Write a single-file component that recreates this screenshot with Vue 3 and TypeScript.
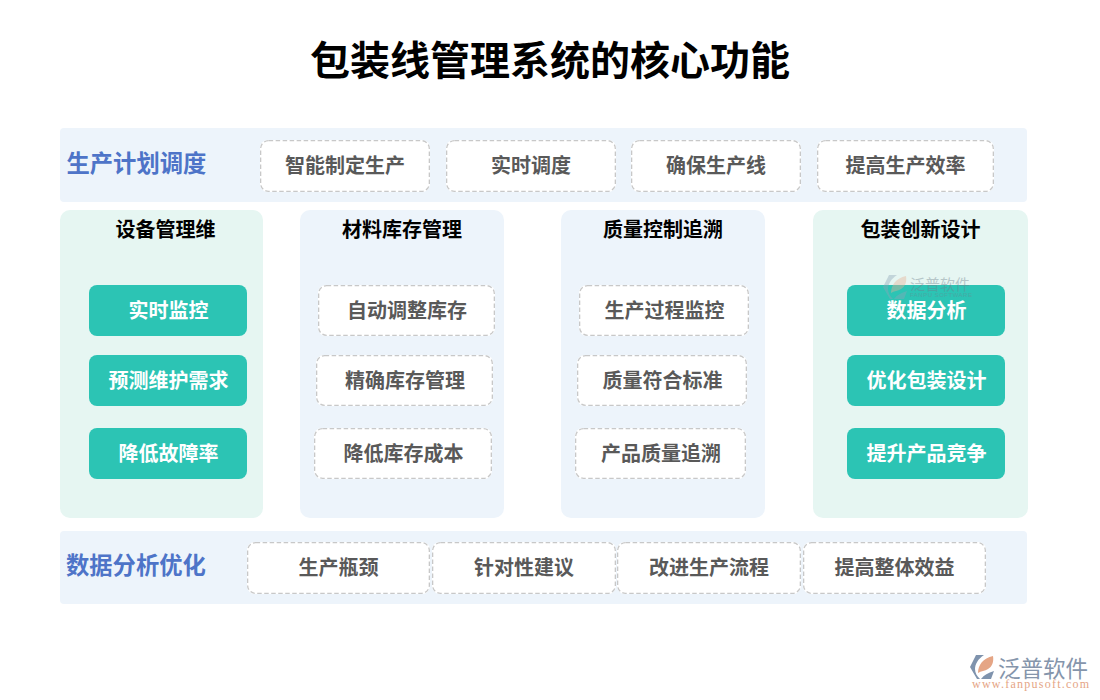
<script setup lang="ts">
const topChips = [
  { text: '智能制定生产', cls: 'w170 ml0' },
  { text: '实时调度', cls: 'w170 ml16' },
  { text: '确保生产线', cls: 'w170 ml15' },
  { text: '提高生产效率', cls: 'w177 ml16' },
]
const bottomChips = [
  { text: '生产瓶颈', cls: 'w183 ml0' },
  { text: '针对性建议', cls: 'w184 ml2' },
  { text: '改进生产流程', cls: 'w184 ml1' },
  { text: '提高整体效益', cls: 'w183 ml2' },
]
const columns = [
  { title: '设备管理维', cls: 'col-a', tone: 'solid', items: [['实时监控', 'pa'], ['预测维护需求', 'pa'], ['降低故障率', 'pa']] },
  { title: '材料库存管理', cls: 'col-b', tone: 'dash', items: [['自动调整库存', 'b1'], ['精确库存管理', 'b2'], ['降低库存成本', 'b3']] },
  { title: '质量控制追溯', cls: 'col-c', tone: 'dash', items: [['生产过程监控', 'c1'], ['质量符合标准', 'c2'], ['产品质量追溯', 'c3']] },
  { title: '包装创新设计', cls: 'col-d', tone: 'solid', items: [['数据分析', 'pd'], ['优化包装设计', 'pd'], ['提升产品竞争', 'pd']] },
]
</script>

<template>
  <div class="page">
    <h1 class="title">包装线管理系统的核心功能</h1>

    <section class="band band-top">
      <div class="band-label lt">生产计划调度</div>
      <div v-for="c in topChips" :key="c.text" class="chip" :class="c.cls">
        <svg class="dash-line"><rect /></svg>
        {{ c.text }}
      </div>
    </section>

    <section class="cols">
      <div v-for="col in columns" :key="col.title" class="col" :class="col.cls">
        <div class="col-title">{{ col.title }}</div>
        <div class="col-items">
          <div v-for="it in col.items" :key="it[0]" class="item" :class="[col.tone, it[1]]">
            <svg v-if="col.tone === 'dash'" class="dash-line"><rect /></svg>
            {{ it[0] }}
          </div>
        </div>
        <div v-if="col.cls === 'col-d'" class="mark">
          <svg width="24" height="24" viewBox="0 0 24 24">
            <path d="M6 0H14C8 4 5 9 5 14C5 18 7 21 10 24H7L0 12Z" fill="#8fa6b8" />
            <path d="M23 1C24 7 22 12 18 14C15 16 11 16 8 18C8 10 13 3 23 1Z" fill="#e8b195" />
            <path d="M11 24C14 20 18 18 24 16L21 24Z" fill="#8fa6b8" />
          </svg>
          <div class="mark-text">
            <div class="mark-cn">泛普软件</div>
            <div class="mark-en">FANPU SOFTWARE</div>
          </div>
        </div>
      </div>
    </section>

    <section class="band band-bottom">
      <div class="band-label lb">数据分析优化</div>
      <div v-for="c in bottomChips" :key="c.text" class="chip" :class="c.cls">
        <svg class="dash-line"><rect /></svg>
        {{ c.text }}
      </div>
    </section>

    <div class="logo">
      <div class="logo-top">
        <svg width="24" height="24" viewBox="0 0 24 24">
          <path d="M6 0H14C8 4 5 9 5 14C5 18 7 21 10 24H7L0 12Z" fill="#7f93ad" />
          <path d="M23 1C24 7 22 12 18 14C15 16 11 16 8 18C8 10 13 3 23 1Z" fill="#e5a585" />
          <path d="M11 24C14 20 18 18 24 16L21 24Z" fill="#7f93ad" />
        </svg>
        <span class="logo-cn">泛普软件</span>
      </div>
      <div class="logo-url">www.fanpusoft.com</div>
    </div>
  </div>
</template>

<style>
html, body { margin: 0; background: #fff; }
</style>

<style scoped>
.page {
  position: relative;
  width: 1100px;
  height: 700px;
  overflow: hidden;
  background: #fff;
  font-family: "Noto Sans CJK SC", "Liberation Sans", sans-serif;
}
.title {
  margin: 0;
  padding-top: 29px;
  height: 128px;
  box-sizing: border-box;
  text-align: center;
  font-size: 40px;
  line-height: 58px;
  font-weight: 700;
  color: #000;
}
.band {
  display: flex;
  align-items: center;
  width: 967px;
  margin-left: 60px;
  background: #edf4fb;
  border-radius: 4px;
}
.band-top { height: 74px; padding-top: 2px; box-sizing: border-box; }
.band-bottom { height: 73px; margin-top: 13px; }
.band-label {
  font-size: 23.3px;
  font-weight: 700;
  color: #4e74c8;
  white-space: nowrap;
  line-height: 30px;
  box-sizing: border-box;
  flex: none;
}
.lt { width: 200px; padding-left: 6.5px; margin-top: -8px; }
.lb { width: 187px; padding-left: 6px; margin-top: -7px; }
.chip, .item {
  position: relative;
  box-sizing: border-box;
  display: flex;
  align-items: center;
  justify-content: center;
  font-size: 20px;
  font-weight: 700;
  border-radius: 8px;
  white-space: nowrap;
}
.chip {
  flex: none;
  height: 52px;
  background: #fff;
  color: #595959;
}
.dash-line {
  position: absolute;
  left: 0;
  top: 0;
  width: 100%;
  height: 100%;
  pointer-events: none;
}
.dash-line rect {
  x: 0.65px;
  y: 0.65px;
  width: calc(100% - 1.3px);
  height: calc(100% - 1.3px);
  rx: 8px;
  fill: none;
  stroke: #c8c8c8;
  stroke-width: 1.3px;
  stroke-dasharray: 4.5 2.5;
}
.band-top .chip { padding-bottom: 4px; }
.band-bottom .chip { padding-bottom: 2px; }
.w170 { width: 170px; }
.w177 { width: 177px; }
.w183 { width: 183px; }
.w184 { width: 184px; }
.ml0 { margin-left: 0; }
.ml1 { margin-left: 1px; }
.ml2 { margin-left: 2px; }
.ml15 { margin-left: 15px; }
.ml16 { margin-left: 16px; }
.cols {
  display: flex;
  margin: 8px 0 0 60px;
  height: 308px;
}
.col {
  position: relative;
  box-sizing: border-box;
  border-radius: 10px;
  padding-top: 5px;
}
.col-a { width: 203px; background: #e6f6f2; }
.col-b { width: 204px; margin-left: 37px; background: #edf4fb; }
.col-c { width: 204px; margin-left: 57px; background: #edf4fb; }
.col-d { width: 215px; margin-left: 48px; background: #e6f6f2; }
.col-title {
  height: 28px;
  line-height: 28px;
  font-size: 20px;
  font-weight: 700;
  color: #000;
  text-align: center;
}
.col-a .col-title { padding-left: 8px; }
.col-items {
  margin-top: 42px;
  display: flex;
  flex-direction: column;
}
.item { height: 51px; padding: 0 0 2px 1px; }
.item + .item { margin-top: 19px; }
.item + .item + .item { margin-top: 22px; }
.solid { background: #2cc4b4; color: #fff; border-radius: 8px; width: 158px; }
.dash { background: #fff; color: #595959; }
.pa { margin-left: 29px; }
.pd { margin-left: 34px; }
.b1 { margin-left: 18px; width: 177px; }
.b2 { margin-left: 16px; width: 177px; }
.b3 { margin-left: 14px; width: 178px; }
.c1 { margin-left: 18px; width: 170px; }
.c2 { margin-left: 16px; width: 170px; }
.c3 { margin-left: 14px; width: 171px; }
.mark {
  position: absolute;
  left: 70px;
  top: 65px;
  display: flex;
  align-items: flex-start;
  gap: 3px;
  opacity: 0.4;
}
.mark-text { display: flex; flex-direction: column; }
.mark-cn { font-size: 15px; line-height: 17px; color: #6f7f8c; white-space: nowrap; }
.mark-en {
  font-size: 6px;
  line-height: 7px;
  color: #6f7f8c;
  font-family: "Liberation Sans", sans-serif;
  letter-spacing: 0.5px;
  white-space: nowrap;
}
.logo {
  position: absolute;
  left: 970px;
  top: 655px;
  width: 125px;
}
.logo-top { display: flex; align-items: center; gap: 4px; height: 24px; }
.logo-cn {
  font-size: 22.5px;
  line-height: 24px;
  color: #8595ab;
  font-weight: 400;
  white-space: nowrap;
}
.logo-url {
  font-family: "Liberation Serif", serif;
  font-size: 12px;
  line-height: 10px;
  color: #e5a585;
  letter-spacing: 1.25px;
  white-space: nowrap;
  margin-left: 2px;
}
</style>
